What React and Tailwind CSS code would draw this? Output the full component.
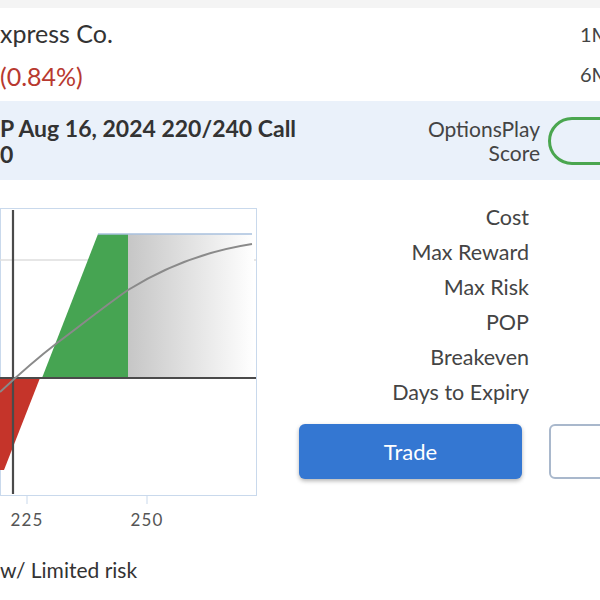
const lato = { fontFamily: "Lato, 'Open Sans', sans-serif" };

const stats = ["Cost", "Max Reward", "Max Risk", "POP", "Breakeven", "Days to Expiry"];

function PayoffChart() {
  return (
    <svg width="257" height="330" viewBox="0 0 257 330" className="block">
      <defs>
        <linearGradient id="fade" x1="0" x2="1" y1="0" y2="0">
          <stop offset="0" stopColor="#c6c6c6" />
          <stop offset="1" stopColor="#ffffff" />
        </linearGradient>
      </defs>
      <rect x="0.5" y="0.5" width="256" height="287" fill="#fff" stroke="#c9d9ec" />
      <line x1="0" y1="52" x2="256" y2="52" stroke="#dedede" strokeWidth="1.5" />
      <rect x="128" y="26" width="126" height="144" fill="url(#fade)" />
      <polygon points="42,170 98,26 128,26 128,170" fill="#46a452" />
      <polygon points="0,170 40,170 4,262 0,262" fill="#c5342a" />
      <line x1="98" y1="26" x2="252" y2="26" stroke="#a9c0de" strokeWidth="1.5" />
      <line x1="13" y1="2" x2="13" y2="286" stroke="#4a4a4a" strokeWidth="2.2" />
      <line x1="0" y1="170" x2="256" y2="170" stroke="#4a4a4a" strokeWidth="2.2" />
      <path d="M0,184 C15,170 35,152 57,135 C85,114 105,98 128,82 C160,62 200,44 252,36" fill="none" stroke="#8a8a8a" strokeWidth="2" />
      <line x1="27" y1="288" x2="27" y2="296" stroke="#c9d9ec" />
      <line x1="147" y1="288" x2="147" y2="296" stroke="#c9d9ec" />
      <text x="27" y="318" textAnchor="middle" fontSize="17" fill="#555" style={lato} letterSpacing="1.2">225</text>
      <text x="147" y="318" textAnchor="middle" fontSize="17" fill="#555" style={lato} letterSpacing="1.2">250</text>
    </svg>
  );
}

export default function App() {
  return (
    <div className="w-[600px] h-[600px] overflow-hidden bg-white text-[#333]" style={lato}>
      <div className="w-[680px]">
        <div className="h-2 bg-[#f4f4f4]" />
        <div className="flex pt-1 pb-[3px]">
          <div className="w-[580px] text-[25px] leading-[43px]">
            <div>xpress Co.</div>
            <div className="text-[#b8392f]">(0.84%)</div>
          </div>
          <div className="text-[20px] leading-[40px] pt-[2px] text-[#444]">
            <div>1M</div>
            <div>6M</div>
          </div>
        </div>

        <div className="flex items-center h-[79px] bg-[#eaf1fa]">
          <div className="w-[400px] text-[23px] font-bold leading-[26px] text-[#333]">
            <div>P Aug 16, 2024 220/240 Call</div>
            <div>0</div>
          </div>
          <div className="w-[140px] text-right text-[21px] leading-[24px] text-[#444]">
            <div>OptionsPlay</div>
            <div>Score</div>
          </div>
          <div className="ml-2 w-[110px] h-[48px] rounded-full border-[3px] border-[#4aa64f]" />
        </div>

        <div className="flex pt-5">
          <div className="pt-2 w-[299px] shrink-0">
            <PayoffChart />
            <div className="text-[21px] mt-[16px]">w/ Limited risk</div>
          </div>
          <div className="w-[381px] shrink-0">
            <div className="w-[230px] text-right text-[21.5px] leading-[35px] text-[#444]">
              {stats.map((s) => (
                <div key={s}>{s}</div>
              ))}
            </div>
            <div className="flex gap-[27px] mt-[14px]">
              <button className="w-[223px] h-[55px] shrink-0 rounded-md bg-[#3477d2] text-white text-[22px] shadow-[0_2px_4px_rgba(0,0,0,0.3)]">
                Trade
              </button>
              <button className="w-[110px] h-[55px] shrink-0 rounded-md border-2 border-[#a9b8cc] bg-white" />
            </div>
          </div>
        </div>
      </div>
    </div>
  );
}
